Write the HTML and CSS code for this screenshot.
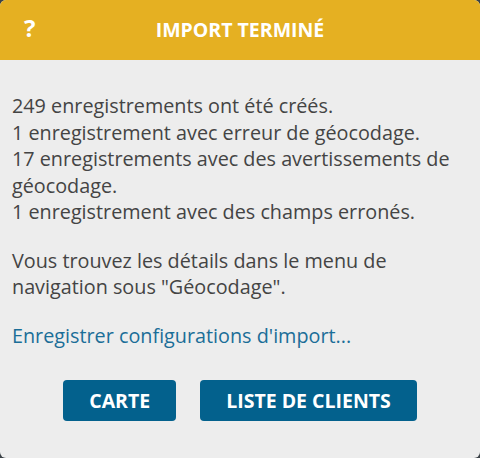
FILE: index.html
```html
<!DOCTYPE html>
<html lang="fr">
<head>
<meta charset="utf-8">
<title>Import terminé</title>
<link rel="stylesheet" href="styles.css">
</head>
<body>
<div class="dialog">
  <header class="dialog-header">
    <span class="help">?</span>
    <h1 class="title">IMPORT TERMINÉ</h1>
  </header>
  <main class="dialog-body">
    <p class="para">249 enregistrements ont été créés.<br>1 enregistrement avec erreur de géocodage.<br>17 enregistrements avec des avertissements de géocodage.<br>1 enregistrement avec des champs erronés.</p>
    <p class="para">Vous trouvez les détails dans le menu de navigation sous "Géocodage".</p>
    <a class="link" href="#">Enregistrer configurations d'import...</a>
    <div class="actions">
      <button class="btn">CARTE</button>
      <button class="btn">LISTE DE CLIENTS</button>
    </div>
  </main>
</div>
</body>
</html>
```

FILE: styles.css
```css
html, body {
  margin: 0;
  padding: 0;
  background: #3b4247;
}
.dialog {
  width: 480px;
  height: 458px;
  background: #ededed;
  border-radius: 6px;
  overflow: hidden;
  font-family: "Open Sans", "Noto Sans", sans-serif;
  display: flex;
  flex-direction: column;
}
.dialog-header {
  height: 60px;
  flex: none;
  background: #e5b022;
  display: flex;
  align-items: center;
  justify-content: center;
  position: relative;
  color: #fff;
}
.help {
  position: absolute;
  left: 24px;
  top: 12px;
  font-size: 24px;
  font-weight: 700;
  line-height: 32px;
}
.title {
  margin: 0;
  font-size: 19.5px;
  font-weight: 700;
  line-height: 26px;
}
.dialog-body {
  padding: 33px 12px 0;
  color: #444;
  font-size: 19.8px;
  line-height: 26.5px;
  display: flex;
  flex-direction: column;
  align-items: flex-start;
}
.para {
  margin: 0 0 22px;
}
.link {
  color: #1b6e98;
  text-decoration: none;
}
.actions {
  align-self: stretch;
  display: flex;
  justify-content: center;
  gap: 24px;
  margin-top: 31px;
}
.btn {
  height: 41px;
  padding: 0 26px;
  border: 0;
  border-radius: 4px;
  background: #03618d;
  color: #fff;
  font-family: inherit;
  font-size: 19.5px;
  font-weight: 700;
}
```
